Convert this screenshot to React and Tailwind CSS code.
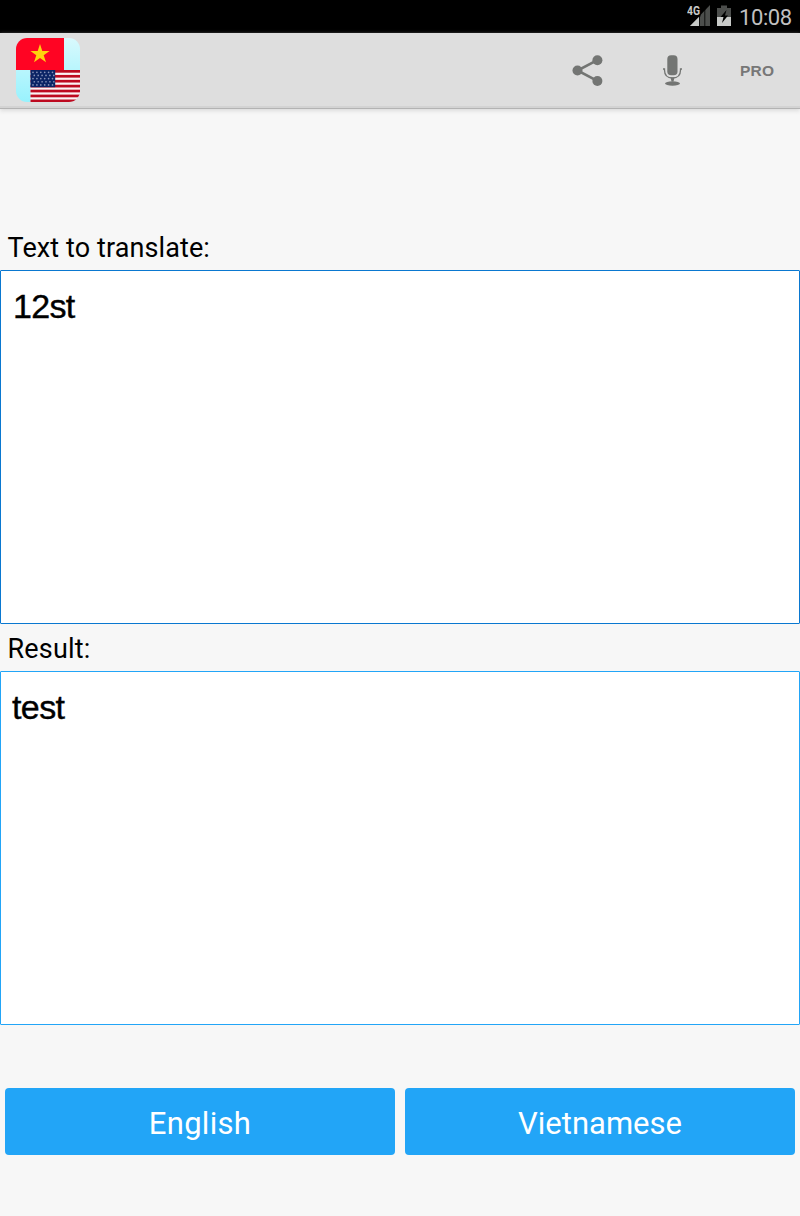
import React from "react";

const STRIPES = [0, 1, 2, 3, 4, 5, 6];
const STAR_ROWS = [0, 1, 2, 3, 4];
const STAR_COLS = [0, 1, 2, 3, 4, 5];

function AppLogo() {
  return (
    <svg className="block h-16 w-16" viewBox="0 0 64 64">
      <defs>
        <linearGradient id="sky" x1="0" y1="0" x2="0" y2="1">
          <stop offset="0" stopColor="#d9f9fd" />
          <stop offset="1" stopColor="#98f2fd" />
        </linearGradient>
        <clipPath id="tile">
          <rect width="64" height="64" rx="11" />
        </clipPath>
      </defs>
      <g clipPath="url(#tile)">
        <rect width="64" height="64" fill="url(#sky)" />
        <rect width="48" height="32" fill="#ff0423" />
        <path
          d="M24 6l2.300 7h7.300l-5.900 4.300 2.300 7-6-4.300-6 4.300 2.300-7-5.900-4.300h7.300z"
          fill="#ffd20d"
        />
        <rect x="14.5" y="32" width="49.5" height="32" fill="#fbf3f4" />
        {STRIPES.map((i) => (
          <rect key={i} x="14.5" y={32 + i * 4.92} width="49.5" height="2.7" fill="#bd0a20" />
        ))}
        <rect x="14.5" y="32" width="24.7" height="17.2" fill="#0b2465" />
        {STAR_ROWS.map((r) =>
          STAR_COLS.map((c) => (
            <circle
              key={`${r}-${c}`}
              cx={17 + c * 3.9 + (r % 2) * 1.3}
              cy={34.3 + r * 3.15}
              r="0.85"
              fill="#8792b8"
            />
          ))
        )}
      </g>
    </svg>
  );
}

function StatusBar() {
  return (
    <div className="flex h-[33px] items-start justify-end bg-black pr-2">
      <svg className="h-[33px] w-[24px]" viewBox="687 0 24 33">
        <path d="M690 26L710 5v21z" fill="#4c4e4c" />
        <path d="M687 0h13.500v16.500h-13.500z" fill="#000" />
        <path d="M690 26l9-9v9z" fill="#c8cac8" />
        <path d="M699.500 5v21M704.800 5v21" stroke="#000" strokeWidth="0.8" />
        <text x="687" y="15" fill="#c8cac8" fontFamily="Roboto, sans-serif" fontSize="12.5" fontWeight="700" textLength="13" lengthAdjust="spacingAndGlyphs">
          4G
        </text>
      </svg>
      <svg className="ml-[5px] h-[33px] w-[16px]" viewBox="716 0 16 33">
        <path d="M717 8h4V5.500h6V8h4v9h-14z" fill="#4c4e4c" />
        <path d="M717 17h14v9h-14z" fill="#c8cac8" />
        <path d="M726.500 10l-6 7h3l-1.500 6 6-7.500h-3z" fill="#000" />
      </svg>
      <span className="ml-[7px] mt-[3px] w-[53px] whitespace-nowrap font-[Roboto,sans-serif] text-[22px] leading-[30px] tracking-[-0.4px] text-[#c0c0c0]">
        10:08
      </span>
    </div>
  );
}

function ActionBar() {
  return (
    <header className="flex h-[76px] items-start border-b border-[#b3b3b3] bg-[#dedede] pl-4 shadow-[inset_0_-2px_0_#d3d3d3,0_2px_4px_#dcdcdc]">
      <div className="mt-[5px]">
        <AppLogo />
      </div>
      <div className="ml-auto flex h-[75px] items-center">
        <svg className="h-[34px] w-[34px]" viewBox="570 54 34 34">
          <path d="M597.300 60.200L577.500 70.500l19.800 10.400" fill="none" stroke="#737573" strokeWidth="2.600" />
          <circle cx="597.400" cy="60.200" r="5" fill="#737573" />
          <circle cx="577.500" cy="70.500" r="5" fill="#737573" />
          <circle cx="597.400" cy="81" r="5" fill="#737573" />
        </svg>
        <svg className="ml-[56px] h-[34px] w-[24px]" viewBox="660 54 24 34">
          <rect x="667.300" y="55.300" width="10.200" height="20" rx="3.800" fill="#737573" />
          <path d="M663 69h1.500v1c0 5 3 8 8 8s8-3 8-8v-1h1.500" fill="none" stroke="#737573" strokeWidth="1.300" />
          <path d="M670.500 77.500h4l-1 4h-2z" fill="#737573" />
          <ellipse cx="672.500" cy="83.500" rx="7.500" ry="2.200" fill="#737573" />
        </svg>
        <span className="ml-[56px] w-[60px] font-['Liberation_Sans',sans-serif] text-[15.5px] font-bold leading-[18px] tracking-[0.2px] text-[#777]">
          PRO
        </span>
      </div>
    </header>
  );
}

export default function App() {
  return (
    <div className="flex h-[1216px] w-[800px] flex-col overflow-hidden bg-[#f7f7f7] font-[Roboto,sans-serif] text-black">
      <StatusBar />
      <ActionBar />
      <main className="flex flex-col pt-[116px]">
        <div className="h-[45px] pl-[7.5px] text-[27px] leading-[47px] tracking-[0.1px]">
          Text to translate:
        </div>
        <div className="h-[354px] rounded-[1px] border border-[#0a78d0] bg-white pl-[12px] pt-[15px] font-['Liberation_Sans',sans-serif] text-[34px] leading-[40px] tracking-[-0.7px] [-webkit-text-stroke:0.4px_black]">
          12st
        </div>
        <div className="h-[47px] pl-[7.5px] text-[27px] leading-[51px] tracking-[0.2px]">
          Result:
        </div>
        <div className="h-[354px] rounded-[1px] border border-[#22a5f7] bg-white pl-[11px] pt-[15px] font-['Liberation_Sans',sans-serif] text-[34px] leading-[40px] tracking-[-0.6px] [-webkit-text-stroke:0.4px_black]">
          test
        </div>
        <div className="mt-[63px] flex gap-[10px] px-[5px] text-[31px] leading-[72px] text-white">
          <button className="h-[67px] flex-1 rounded-[4px] bg-[#22a5f7] tracking-[0.3px]">English</button>
          <button className="h-[67px] flex-1 rounded-[4px] bg-[#22a5f7]">Vietnamese</button>
        </div>
      </main>
    </div>
  );
}
